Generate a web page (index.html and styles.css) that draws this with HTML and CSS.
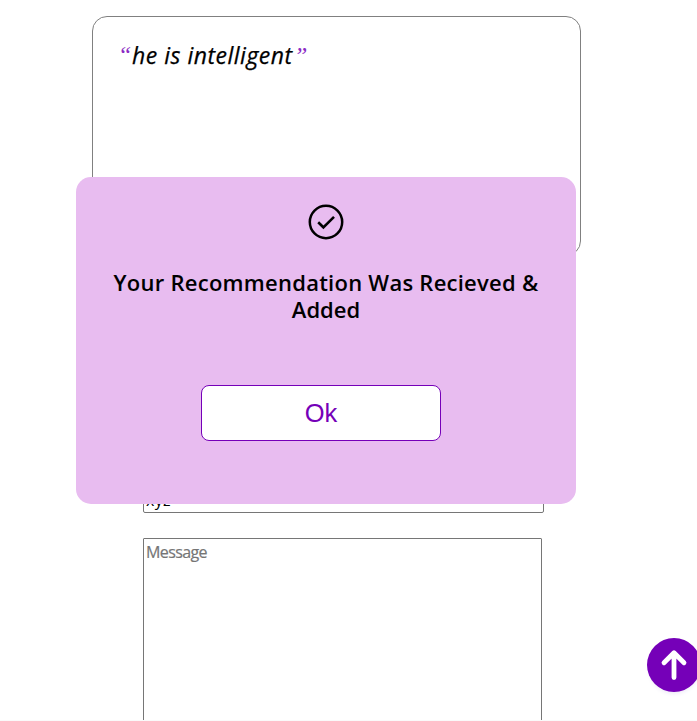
FILE: index.html
```html
<!DOCTYPE html>
<html lang="en">
<head>
<meta charset="utf-8">
<title>Recommendations</title>
<link rel="stylesheet" href="styles.css">
</head>
<body>
<main class="page">
  <section class="recommendation"><p class="quote"><span class="mark">“</span><span class="quote-text">he is intelligent</span><span class="mark mark-end">”</span></p></section>
  <form class="form">
    <input class="field" type="text" value="xyz">
    <textarea class="message" placeholder="Message"></textarea>
  </form>
</main>
<div class="popup">
  <svg class="check" viewBox="0 0 36 36" fill="none" stroke="#000"><circle cx="18" cy="18" r="16.2" stroke-width="2.5"/><path d="M10.2 18.2l5.2 5.1L26 12.8" stroke-width="2.6"/></svg>
  <h3 class="title"><span class="title-first">Your Recommendation Was Recieved &amp;</span><span class="title-second">Added</span></h3>
  <button class="ok">Ok</button>
</div>
<a class="top" href="#"><svg viewBox="0 0 54 54" fill="none" stroke="#fff" stroke-width="4.8" stroke-linecap="round" stroke-linejoin="round"><path d="M27 39.5V14.8M17 24.7l10-10 10 10"/></svg></a>
</body>
</html>
```
FILE: styles.css
```css
* { box-sizing: border-box; }
body { margin: 0; height: 721px; overflow: hidden; background: #fff; border-bottom: 1px solid #fafafa; font-family: "Trebuchet MS", "Open Sans", sans-serif; }
.page { height: 720px; overflow: hidden; padding: 16px 0 0 92px; }
.recommendation { width: 489px; height: 240px; border: 1px solid #808080; border-radius: 15px; padding: 23px 26px; }
.quote { margin: 0; font-size: 23px; line-height: 30px; font-style: italic; white-space: nowrap; display: flex; }
.quote-text { letter-spacing: .5px; width: 163px; -webkit-text-stroke: .25px #000; }
.mark { color: #8a2bc4; font-family: "Liberation Serif", serif; font-size: 24px; width: 13px; }
.mark:first-child { margin-left: -1px; width: 14px; }
.mark-end { margin-left: -1px; }
.form { margin: 222px 0 0 51px; display: flex; flex-direction: column; gap: 25px; }
.field { width: 401px; height: 35px; border: 1px solid #767676; border-radius: 2px; padding: 8px 2px 0; font: 500 16px "Trebuchet MS", "Open Sans", sans-serif; letter-spacing: .3px; }
.message { width: 399px; height: 230px; flex: none; resize: none; border: 1px solid #767676; border-radius: 1px; padding: 2px; font: 16px/22px "Trebuchet MS", "Open Sans", sans-serif; letter-spacing: -.6px; }
.message::placeholder { color: #757575; -webkit-text-stroke: .2px #757575; }
.popup { position: fixed; left: 76px; top: 177.4px; width: 500px; height: 326.8px; border-radius: 15px; background: #e8bcf0; display: flex; flex-direction: column; align-items: center; padding-top: 26.6px; }
.check { width: 36px; height: 36px; flex: none; }
.title { margin: 29px 0 0; font-size: 22px; line-height: 27px; font-weight: 600; text-align: center; white-space: nowrap; }
.title-first, .title-second { display: block; }
.title-first { letter-spacing: .25px; }
.ok { margin: 62.5px 10px 0 0; width: 240px; height: 56px; border: 1px solid #7500b8; border-radius: 8px; background: #fff; color: #7500b8; font: 25.5px Arial, "Liberation Sans", sans-serif; padding: 0; }
.top { position: fixed; left: 647px; top: 638px; width: 54px; height: 54px; border-radius: 50%; background: #7500b8; box-shadow: 0 4px 5px -3px #e8e4f4; }
.top svg { display: block; width: 54px; height: 54px; }
```
